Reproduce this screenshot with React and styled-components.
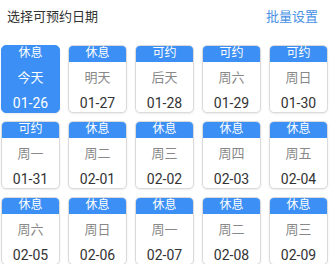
import React from "react";
import styled, { createGlobalStyle } from "styled-components";

const Global = createGlobalStyle`
  html, body { margin: 0; padding: 0; background: #fff; }
  body { font-family: Roboto, "Noto Sans CJK SC", sans-serif; }
`;

const BLUE = "#3b8ff5";

const Page = styled.div`
  width: 330px;
  padding: 0 1px 0 1px;
  box-sizing: border-box;
`;

const Header = styled.div`
  display: flex;
  align-items: center;
  justify-content: space-between;
  height: 30px;
  padding: 0 11px 0 6px;
`;

const Title = styled.span`
  font-size: 13px;
  color: #333;
`;

const Action = styled.span`
  font-size: 13px;
  color: #4690e6;
`;

const Grid = styled.div`
  margin-top: 15px;
  display: grid;
  grid-template-columns: repeat(5, 59px);
  column-gap: 8px;
  row-gap: 8px;
`;

const Card = styled.div`
  height: 68px;
  box-sizing: border-box;
  border-radius: 5px;
  overflow: hidden;
  display: flex;
  flex-direction: column;
  text-align: center;
  border: 1px solid ${(p) => (p.$active ? BLUE : "#dadada")};
  background: ${(p) => (p.$active ? BLUE : "#fff")};
  box-shadow: 0 1px 2px rgba(0, 0, 0, 0.08);
`;

const Band = styled.div`
  height: 17px;
  line-height: 17px;
  background: ${BLUE};
  color: #fff;
  font-size: 12px;
  margin: -1px -1px 0;
`;

const Day = styled.div`
  height: 31px;
  line-height: 31px;
  font-size: 13px;
  color: ${(p) => (p.$active ? "#fff" : "#888")};
`;

const DateText = styled.div`
  line-height: 20px;
  font-size: 14px;
  color: ${(p) => (p.$active ? "#fff" : "#333")};
`;

const items = [
  ["休息", "今天", "01-26"],
  ["休息", "明天", "01-27"],
  ["可约", "后天", "01-28"],
  ["可约", "周六", "01-29"],
  ["可约", "周日", "01-30"],
  ["可约", "周一", "01-31"],
  ["休息", "周二", "02-01"],
  ["休息", "周三", "02-02"],
  ["休息", "周四", "02-03"],
  ["休息", "周五", "02-04"],
  ["休息", "周六", "02-05"],
  ["休息", "周日", "02-06"],
  ["休息", "周一", "02-07"],
  ["休息", "周二", "02-08"],
  ["休息", "周三", "02-09"],
];

export default function App() {
  return (
    <Page>
      <Global />
      <Header>
        <Title>选择可预约日期</Title>
        <Action>批量设置</Action>
      </Header>
      <Grid>
        {items.map(([s, d, dt], i) => (
          <Card key={dt} $active={i === 0}>
            <Band>{s}</Band>
            <Day $active={i === 0}>{d}</Day>
            <DateText $active={i === 0}>{dt}</DateText>
          </Card>
        ))}
      </Grid>
    </Page>
  );
}
